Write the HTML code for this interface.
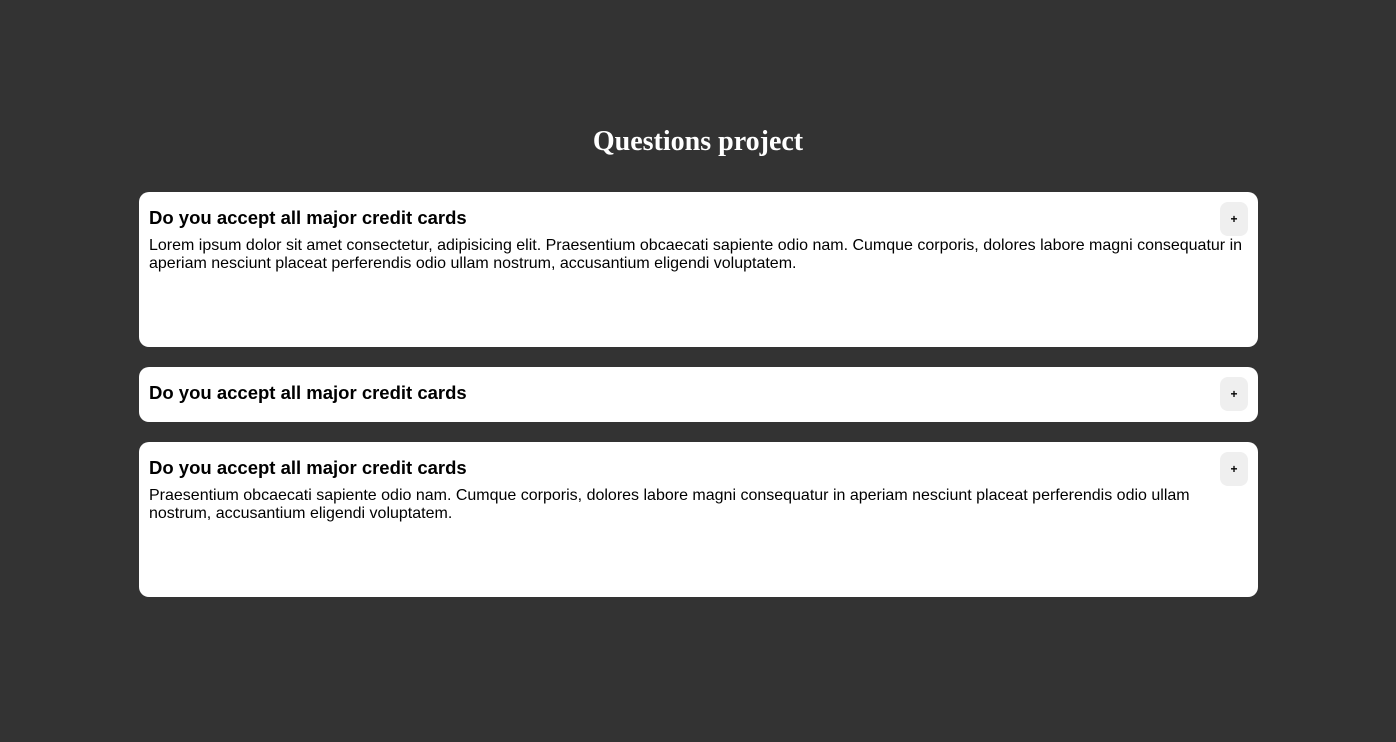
<!DOCTYPE html>
<html><head><style>
body{margin:0;background:#333;font-family:"Liberation Sans",Arial,sans-serif;width:1396px;height:742px;overflow:hidden}
h1{position:absolute;top:126px;left:0;width:1396px;text-align:center;margin:0;color:#fff;font-family:"Liberation Serif",serif;font-weight:bold;font-size:28px;letter-spacing:0px}
.card{position:absolute;left:139px;width:1099px;background:#fff;border-radius:10px;padding:10px}
.card h2{margin:5px 0 8px;font-size:18.5px;font-weight:bold;color:#000;line-height:22px}
.card p{margin:0;font-size:16px;line-height:18px;color:#000;padding-right:4px}
.btn{position:absolute;right:10px;top:10px;width:28px;height:34px;background:#efefef;border-radius:8px;font-size:12px;text-align:center;line-height:34px;font-weight:bold}
</style></head><body>
<h1>Questions project</h1>
<div class="card" style="top:192px;height:135px"><div class="btn">+</div><h2>Do you accept all major credit cards</h2><p>Lorem ipsum dolor sit amet consectetur, adipisicing elit. Praesentium obcaecati sapiente odio nam. Cumque corporis, dolores labore magni consequatur in aperiam nesciunt placeat perferendis odio ullam nostrum, accusantium eligendi voluptatem.</p></div>
<div class="card" style="top:367px;height:35px"><div class="btn">+</div><h2>Do you accept all major credit cards</h2></div>
<div class="card" style="top:442px;height:135px"><div class="btn">+</div><h2>Do you accept all major credit cards</h2><p>Praesentium obcaecati sapiente odio nam. Cumque corporis, dolores labore magni consequatur in aperiam nesciunt placeat perferendis odio ullam nostrum, accusantium eligendi voluptatem.</p></div>
</body></html>
